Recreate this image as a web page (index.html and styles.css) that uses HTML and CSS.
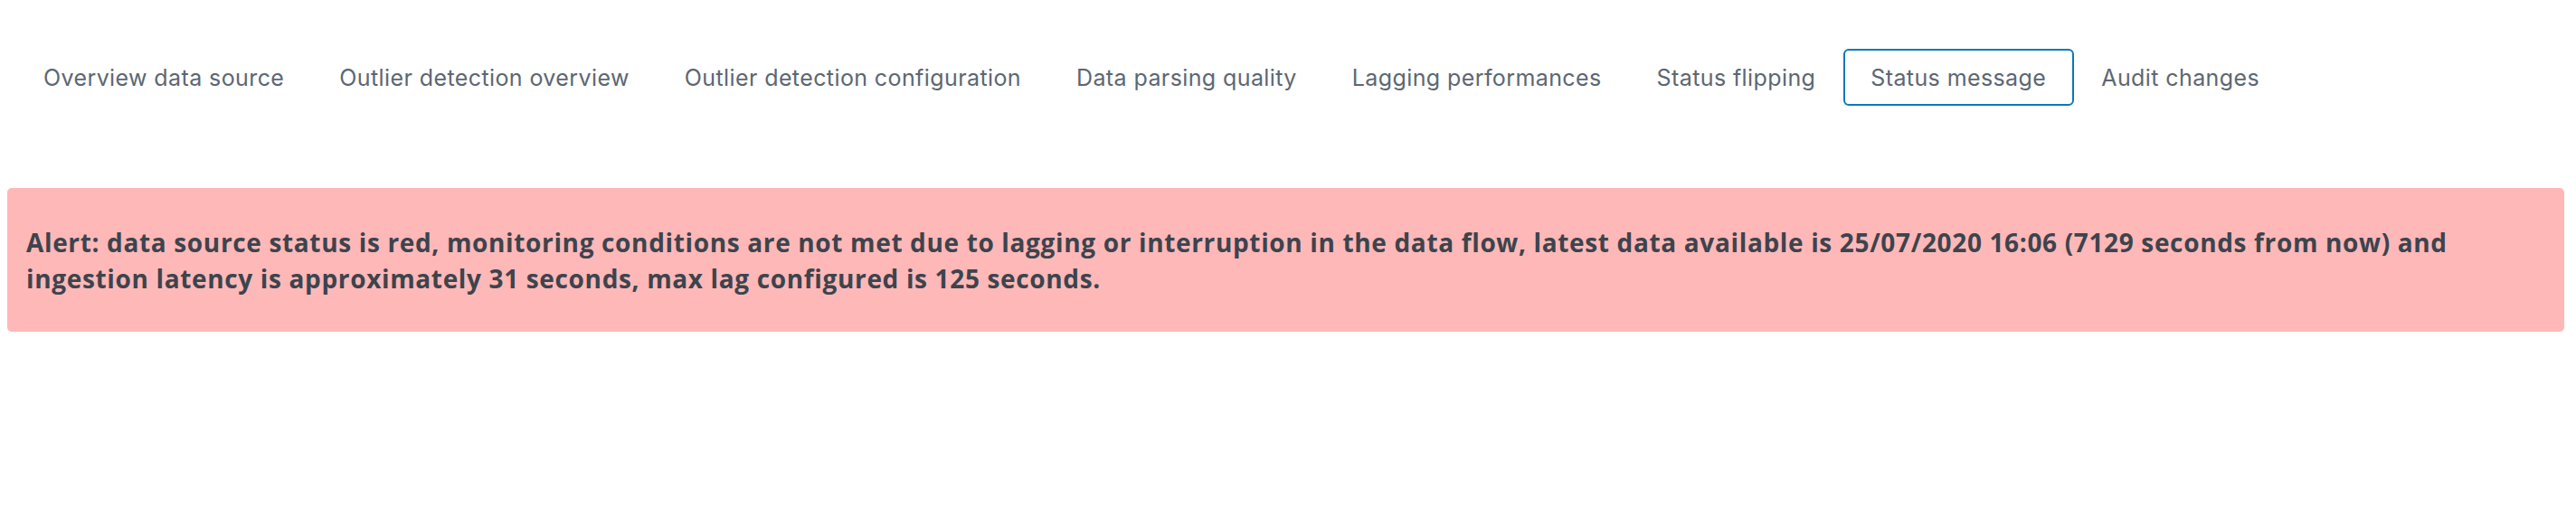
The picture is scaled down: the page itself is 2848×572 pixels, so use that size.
FILE: index.html
```html
<!DOCTYPE html>
<html lang="en">
<head>
<meta charset="utf-8">
<title>Status message</title>
<link rel="stylesheet" href="styles.css">
</head>
<body>
<div class="page">
  <nav class="tabs">
    <a class="tab">Overview data source</a>
    <a class="tab">Outlier detection overview</a>
    <a class="tab">Outlier detection configuration</a>
    <a class="tab">Data parsing quality</a>
    <a class="tab">Lagging performances</a>
    <a class="tab">Status flipping</a>
    <a class="tab active">Status message</a>
    <a class="tab">Audit changes</a>
  </nav>
  <div class="alert">
    <p class="alert-text">Alert: data source status is red, monitoring conditions are not met due to lagging or interruption in the data flow, latest data available is 25/07/2020 16:06 (7129 seconds from now) and ingestion latency is approximately 31 seconds, max lag configured is 125 seconds.</p>
  </div>
</div>
</body>
</html>
```
FILE: styles.css
```css
html, body {
  margin: 0;
  padding: 0;
  background: #ffffff;
}
.page {
  padding: 54px 13px 0 8px;
}
.tabs {
  display: flex;
  margin-left: 10px;
  font-family: Inter, "Open Sans", sans-serif;
}
.tab {
  display: flex;
  align-items: center;
  height: 63px;
  box-sizing: border-box;
  padding: 0 29px 0 28px;
  font-size: 25px;
  letter-spacing: 0.4px;
  color: #5c6773;
  border: 2px solid transparent;
  border-radius: 6px;
  white-space: nowrap;
}
.tab.active {
  border-color: #0a79b8;
}
.alert {
  margin-top: 91px;
  background: #ffb8b8;
  border-radius: 5px;
  padding: 40px 60px 39px 21px;
  min-height: 159px;
  box-sizing: border-box;
}
.alert-text {
  margin: 0;
  font-family: "Open Sans", "Noto Sans", sans-serif;
  font-size: 28px;
  letter-spacing: 0.65px;
  line-height: 40px;
  font-weight: 700;
  color: #3c444d;
}
```
